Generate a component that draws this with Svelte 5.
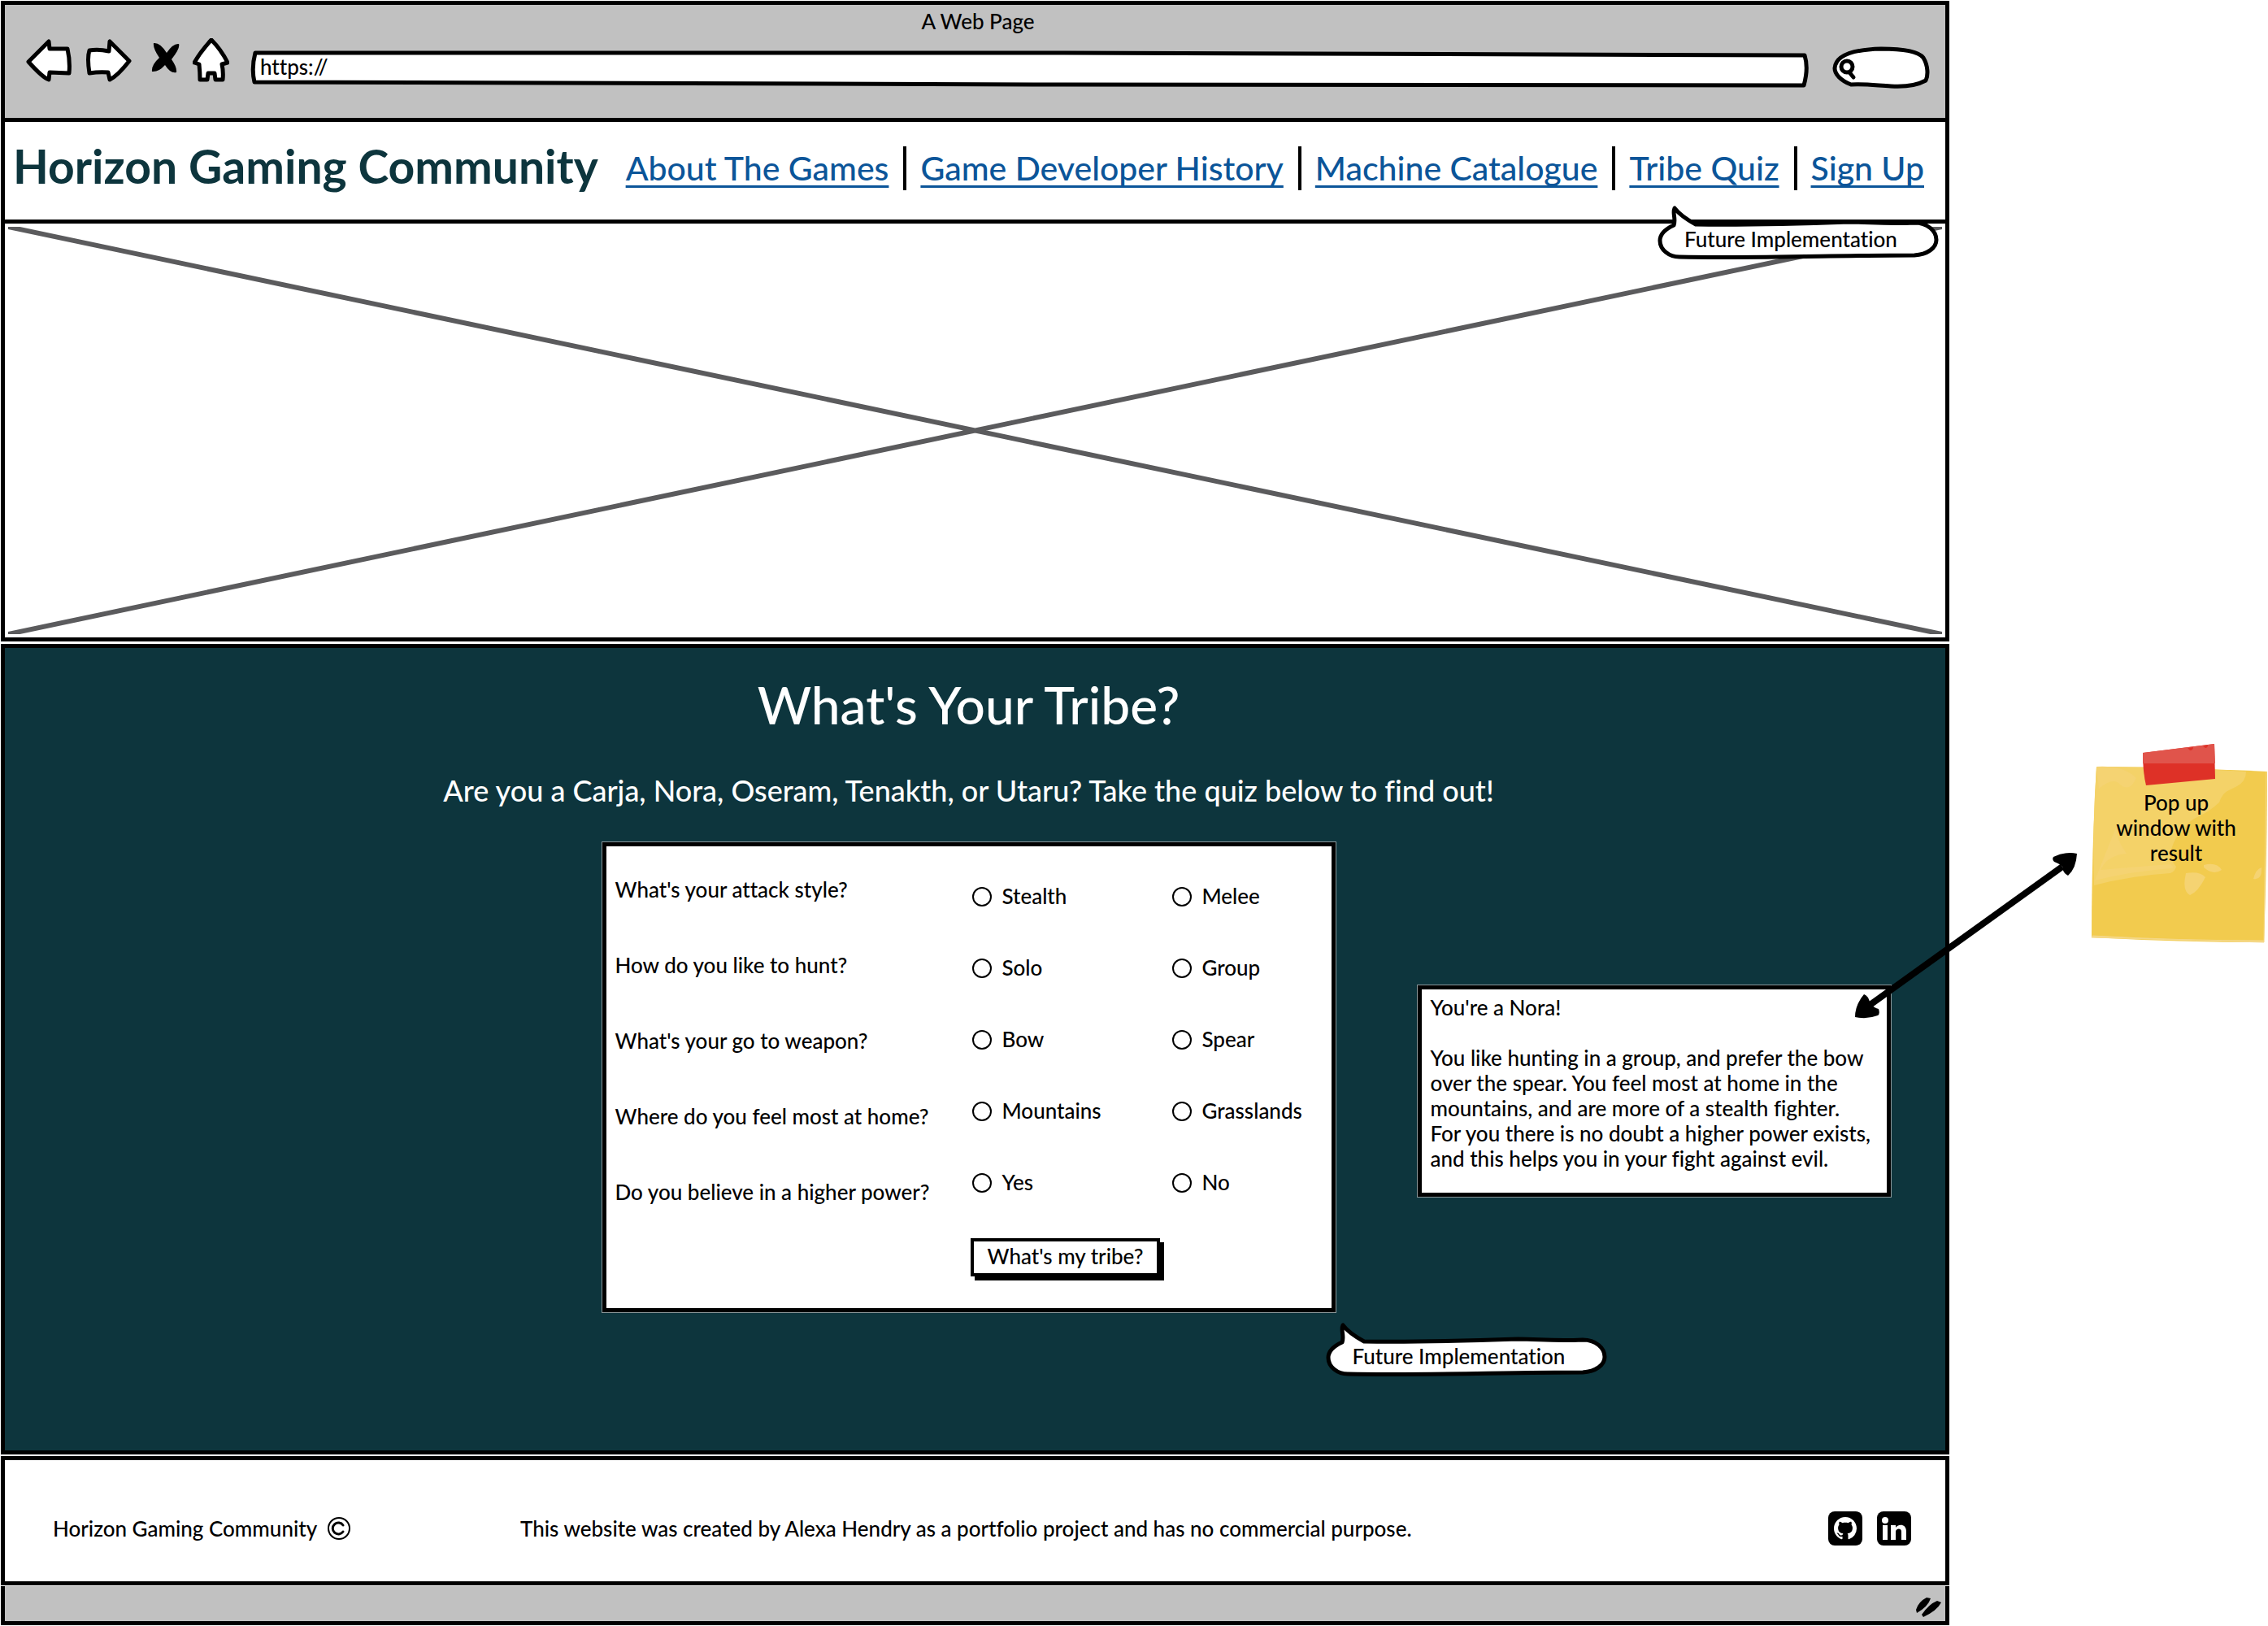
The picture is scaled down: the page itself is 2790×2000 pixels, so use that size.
<script>
  const links = ['About The Games', 'Game Developer History', 'Machine Catalogue', 'Tribe Quiz', 'Sign Up'];

  const quiz = [
    { id: 'attack', question: "What's your attack style?", options: ['Stealth', 'Melee'] },
    { id: 'hunt', question: 'How do you like to hunt?', options: ['Solo', 'Group'] },
    { id: 'weapon', question: "What's your go to weapon?", options: ['Bow', 'Spear'] },
    { id: 'home', question: 'Where do you feel most at home?', options: ['Mountains', 'Grasslands'] },
    { id: 'power', question: 'Do you believe in a higher power?', options: ['Yes', 'No'] }
  ];

  const result = [
    'You like hunting in a group, and prefer the bow',
    'over the spear. You feel most at home in the',
    'mountains, and are more of a stealth fighter.',
    'For you there is no doubt a higher power exists,',
    'and this helps you in your fight against evil.'
  ];
</script>

{#snippet callout(text)}
  <svg class="bubble" viewBox="0 0 345 64" preserveAspectRatio="none" aria-hidden="true">
    <path d="M20 22 C9 27 3 33 3 41 C3 52 14 61 27 61 C120 63 220 59 316 59 C332 58 343 50 343 40 C343 29 332 19 316 19 C280 21 262 18 236 18 C180 20 120 22 47 21 C36 15 27 9 21 1 C18 7 23 14 20 22Z" fill="#fff" stroke="#000" stroke-width="5" stroke-linejoin="round" />
  </svg>
  <span class="bubble-text">{text}</span>
{/snippet}

<div class="page">
  <div class="window">
    <header class="browser">
      <div class="browser-title">A Web Page</div>
      <div class="toolbar">
        <div class="tools">
          <button class="tool" aria-label="Back">
            <svg width="57" height="54" viewBox="0 0 57 54"><path d="M3 29 L28 4 L29 13 L51 13 C53 22 54 33 53 43 L29 42 L28 51 Q20 48 3 29Z" fill="#fff" stroke="#000" stroke-width="5" stroke-linejoin="round" /></svg>
          </button>
          <button class="tool" aria-label="Forward">
            <svg width="57" height="54" viewBox="0 0 57 54"><path d="M54 28 L30 4 L29 16 Q16 13 5 15 Q2 24 5 43 Q17 41 28 42 L30 51 Q40 46 54 28Z" fill="#fff" stroke="#000" stroke-width="5" stroke-linejoin="round" /></svg>
          </button>
          <button class="tool" aria-label="Stop">
            <svg width="43" height="54" viewBox="0 0 43 54"><path d="M11 6 Q19 5 27 18 Q35 6 42 7 Q44 12 33 26 Q40 36 39 42 Q32 44 25 33 Q17 42 9 41 Q8 33 18 24 Q10 12 11 6Z" /></svg>
          </button>
          <button class="tool" aria-label="Home">
            <svg width="45" height="54" viewBox="0 0 45 54"><path d="M23 2 Q35 14 43 30 L36 32 Q38 41 37 51 L28 51 L27 43 L19 43 L18 51 L9 51 Q9 42 8 32 L2 30 Q10 16 23 2Z" fill="#fff" stroke="#000" stroke-width="5" stroke-linejoin="round" /></svg>
          </button>
        </div>
        <div class="address">
          <svg class="fill" viewBox="0 0 1916 46" preserveAspectRatio="none" aria-hidden="true"><path d="M6 3 L1000 3 L1910 6 Q1915 22 1909 43 L1000 42 L5 39 Q1 22 6 3Z" fill="#fff" stroke="#000" stroke-width="5" stroke-linejoin="round" vector-effect="non-scaling-stroke" /></svg>
          <input class="url" type="text" aria-label="Address" value="https://" />
        </div>
        <div class="search">
          <svg class="fill" viewBox="0 0 120 51" preserveAspectRatio="none" aria-hidden="true">
            <path d="M3 27 C4 12 22 4 60 3 C88 3 106 6 112 14 C118 24 118 36 115 42 C104 48 88 50 72 49 C54 48 38 46 23 47 C10 42 3 34 3 27Z" fill="#fff" stroke="#000" stroke-width="5" stroke-linejoin="round" />
            <ellipse cx="18" cy="25" rx="7" ry="7" fill="none" stroke="#000" stroke-width="5" /><path d="M21 32 L26 38" stroke="#000" stroke-width="5" stroke-linecap="round" />
          </svg>
          <input class="search-input" type="search" aria-label="Search" />
        </div>
      </div>
    </header>

    <div class="site-nav">
      <div class="brand">Horizon Gaming Community</div>
      <nav class="links">
        {#each links as link}
          <span class="link-cell"><a href="#top">{link}</a></span>
        {/each}
      </nav>
    </div>

    <div class="hero">
      <svg class="cross" viewBox="0 0 100 100" preserveAspectRatio="none" aria-hidden="true">
        <path d="M0 0 L100 100 M0 100 L100 0" stroke="#5b5b5d" stroke-width="6" vector-effect="non-scaling-stroke" />
      </svg>
      <div class="callout nav-callout">{@render callout('Future Implementation')}</div>
    </div>

    <main class="tribe">
      <h1>What's Your Tribe?</h1>
      <p class="intro">Are you a Carja, Nora, Oseram, Tenakth, or Utaru? Take the quiz below to find out!</p>
      <div class="stage">
        <form class="quiz card">
          <div class="questions">
            {#each quiz as q}<div id={q.id}>{q.question}</div>{/each}
          </div>
          <div class="answers">
            {#each quiz as q}
              <div class="answer" role="radiogroup" aria-labelledby={q.id}>
                {#each q.options as option}
                  <label><input type="radio" name={q.id} value={option} />{option}</label>
                {/each}
              </div>
            {/each}
            <button type="button" class="submit">What's my tribe?</button>
          </div>
          <div class="callout quiz-callout">{@render callout('Future Implementation')}</div>
        </form>
        <aside class="result card">
          <p>You're a Nora!</p>
          <p>{#each result as line}<span>{line} </span>{/each}</p>
        </aside>
      </div>
    </main>

    <footer class="site-footer">
      <div class="owner">
        <span>Horizon Gaming Community</span>
        <svg width="30" height="30" viewBox="0 0 30 30" role="img" aria-label="Copyright"><circle cx="15" cy="15" r="13" fill="none" stroke="#000" stroke-width="2" /><path d="M20 11 A7 7 0 1 0 20 19" fill="none" stroke="#000" stroke-width="3" stroke-linecap="round" /></svg>
      </div>
      <div class="credit">This website was created by Alexa Hendry as a portfolio project and has no commercial purpose.</div>
      <div class="social">
        <a href="#github" aria-label="GitHub">
          <svg width="42" height="42" viewBox="0 0 42 42"><rect width="42" height="42" rx="8" /><g transform="translate(7 7) scale(1.75)"><path fill="#fff" d="M8 0C3.58 0 0 3.58 0 8c0 3.54 2.29 6.53 5.47 7.59.4.07.55-.17.55-.38 0-.19-.01-.82-.01-1.49-2.01.37-2.53-.49-2.69-.94-.09-.23-.48-.94-.82-1.13-.28-.15-.68-.52-.01-.53.63-.01 1.08.58 1.23.82.72 1.21 1.87.87 2.33.66.07-.52.28-.87.51-1.07-1.78-.2-3.64-.89-3.64-3.95 0-.87.31-1.59.82-2.15-.08-.2-.36-1.02.08-2.12 0 0 .67-.21 2.2.82.64-.18 1.32-.27 2-.27s1.36.09 2 .27c1.53-1.04 2.2-.82 2.2-.82.44 1.1.16 1.92.08 2.12.51.56.82 1.27.82 2.15 0 3.07-1.87 3.75-3.65 3.95.29.25.54.73.54 1.48 0 1.07-.01 1.93-.01 2.2 0 .21.15.46.55.38A8.01 8.01 0 0 0 16 8c0-4.42-3.58-8-8-8z" /></g></svg>
        </a>
        <a href="#linkedin" aria-label="LinkedIn">
          <svg width="42" height="42" viewBox="0 0 42 42"><rect width="42" height="42" rx="8" /><circle cx="10" cy="11" r="4" fill="#fff" /><path fill="#fff" d="M7 17h6v18H7zM17 17h6v3c2-4 13-6 13 5v10h-6V25c0-5-7-4-7 0v10h-6z" /></svg>
        </a>
      </div>
    </footer>

    <div class="status">
      <svg width="32" height="26" viewBox="0 0 32 26" aria-hidden="true"><path d="M1 16 Q4 6 14 1 L19 2 Q16 12 2 20Z M8 22 Q17 9 27 5 L32 7 Q27 17 10 25Z" /></svg>
    </div>
  </div>

  <div class="notes">
    <svg class="arrow" width="280" height="210" viewBox="0 0 280 210" aria-hidden="true">
      <path d="M20 191 L258 20" stroke="#000" stroke-width="8" />
      <path d="M3 205 Q3 190 14 177 Q19 178 22 189 Q27 194 32 195 Q34 201 31 203 Q18 208 3 205Z M276 4 Q262 1 247 8 Q245 11 248 14 Q257 17 259 22 Q258 27 265 31 Q275 22 276 4Z" />
    </svg>
    <div class="sticky">
      <svg class="paper" viewBox="0 0 218 245" preserveAspectRatio="none" aria-hidden="true">
        <path d="M7 28 Q90 28 217 34 Q217 130 213 244 Q110 244 1 238 Q1 130 7 28Z" fill="#f2cb4e" />
        <path d="M7 28 Q90 28 191 34 Q191 46 180 52 L170 57 Q162 60 158 72 Q146 83 135 88 Q119 95 115 105 Q102 114 98 135 Q98 142 105 151 Q104 156 98 159 Q50 162 4 174 Q2 100 7 28Z" fill="#f4d268" />
        <path d="M7 28 Q40 26 56 42 Q48 60 36 50 Q28 40 10 55 M32 100 Q29 114 44 135 Q20 137 12 155 Q60 151 98 148 Q104 152 99 153 Q48 157 5 168 M117 159 Q134 156 141 164 Q132 182 122 186 Q112 181 117 159 M139 149 Q155 145 161 155 Q151 162 139 152 M200 166 Q203 154 210 152 Q211 168 200 166" fill="#f5d372" />
        <path d="M2 236 Q110 242 213 242 L213 244 L1 238Z M216 34 L213 242" fill="#f5d887" stroke="#f5d887" />
        <path d="M64 11 L152 0 L153 43 L68 51 Q64 35 64 11Z" fill="#de3127" />
        <path d="M64 11 L152 0 L153 24 L64 24Z" fill="#e0544b" />
        <path d="M119 5 L126 4 Q126 8 122 8Z M138 3 L144 1 Q144 5 141 5Z" fill="#de3127" />
      </svg>
      <p>Pop up<br />window with<br />result</p>
    </div>
  </div>
</div>

<style>
  :global(body) {
    margin: 0;
    background: #fff;
  }
  * {
    box-sizing: border-box;
  }
  .page {
    display: grid;
    grid-template-columns: minmax(0, 1fr) 392px;
    padding: 1px 0 0 1px;
    font-family: Lato, 'Open Sans', sans-serif;
    font-size: 26px;
    font-weight: 500;
    font-variant-ligatures: none;
    line-height: 31px;
    color: #000;
  }
  h1,
  p {
    margin: 0;
    font-weight: inherit;
  }
  svg {
    display: block;
  }
  button,
  input {
    font: inherit;
    color: inherit;
    margin: 0;
  }
  .window {
    display: flex;
    flex-direction: column;
  }
  .browser {
    padding: 5px 19px 37px 26px;
    background: #c1c1c1;
    border: 5px solid #000;
  }
  .browser-title {
    text-align: center;
  }
  .toolbar {
    display: flex;
    align-items: flex-end;
    padding-top: 5px;
  }
  .tools {
    display: flex;
    gap: 16px;
    margin-right: 26px;
    padding-bottom: 7px;
  }
  .tool {
    padding: 0;
    border: 0;
    background: none;
  }
  .address {
    position: relative;
    flex: 1;
    height: 46px;
    margin-right: 28px;
  }
  .search {
    position: relative;
    width: 120px;
    height: 51px;
  }
  .fill,
  .bubble,
  .paper {
    position: absolute;
    inset: 0;
    width: 100%;
    height: 100%;
    overflow: visible;
  }
  .url,
  .search-input {
    position: relative;
    width: 100%;
    height: 100%;
    padding: 0 12px 6px;
    border: 0;
    outline: 0;
    background: none;
  }
  .search-input {
    padding-left: 32px;
  }
  .site-nav {
    display: flex;
    align-items: center;
    justify-content: space-between;
    padding: 20px 26px 32px 10px;
    border: solid #000;
    border-width: 0 5px 5px;
  }
  .brand {
    font-size: 57px;
    line-height: 68px;
    font-weight: 700;
    color: #0d353d;
    white-space: nowrap;
  }
  .links {
    display: flex;
    padding-top: 6px;
    font-size: 41px;
    line-height: 54px;
    white-space: nowrap;
  }
  .link-cell + .link-cell {
    margin-left: 18px;
    padding-left: 17px;
    border-left: 4px solid #000;
  }
  .links a {
    color: #0b5599;
    text-decoration: underline;
    text-decoration-thickness: 3px;
    text-underline-offset: 6px;
    text-decoration-skip-ink: none;
  }
  .hero {
    position: relative;
    padding: 4px;
    border: solid #000;
    border-width: 0 5px 5px;
  }
  .cross {
    width: 100%;
    height: 501px;
  }
  .callout {
    position: absolute;
    width: 345px;
    padding: 24px 33px 9px;
    white-space: nowrap;
  }
  .bubble-text {
    position: relative;
  }
  .nav-callout {
    top: -20px;
    right: 9px;
  }
  .tribe {
    margin-top: 3px;
    padding: 32px 16px 170px 0;
    background: #0d353d;
    border: 5px solid #000;
    color: #fff;
    text-align: center;
  }
  h1 {
    font-size: 64px;
    line-height: 76px;
  }
  .intro {
    margin: 47px 0 44px;
    font-size: 36px;
    line-height: 40px;
  }
  .stage {
    display: grid;
    grid-template-columns: minmax(0, 1fr) 902px minmax(0, 1fr);
    align-items: start;
    color: #000;
    text-align: left;
  }
  .card {
    background: #fff;
    border: 5px solid #000;
    outline: 1px solid #8a9699;
  }
  .quiz {
    position: relative;
    grid-column: 2;
    display: flex;
    justify-content: space-between;
    padding: 38px 1px 39px 11px;
  }
  .questions {
    display: flex;
    flex-direction: column;
    gap: 62px;
  }
  .answers {
    width: 443px;
    padding-top: 8px;
  }
  .answer {
    display: grid;
    grid-template-columns: 246px 1fr;
    margin-bottom: 57px;
    padding-left: 2px;
  }
  .answer:last-of-type {
    margin-bottom: 53px;
  }
  label {
    display: flex;
    align-items: center;
    gap: 13px;
  }
  input[type='radio'] {
    appearance: none;
    width: 24px;
    height: 24px;
    border: 2px solid #000;
    border-radius: 50%;
    background: #fff;
  }
  .submit {
    padding: 3px 17px 5px;
    background: #fff;
    border: 4px solid #000;
    box-shadow: 5px 5px 0 #000;
  }
  .quiz-callout {
    top: 588px;
    left: 885px;
  }
  .result {
    margin: 176px 0 0 101px;
    padding: 7px 0 26px 11px;
    width: 582px;
    white-space: nowrap;
  }
  .result p + p {
    margin-top: 31px;
  }
  .result span {
    display: block;
  }
  .site-footer {
    display: grid;
    grid-template-columns: 575px 1fr auto;
    align-items: center;
    margin-top: 2px;
    padding: 63px 42px 44px 59px;
    border: 5px solid #000;
  }
  .owner,
  .social {
    display: flex;
    align-items: center;
  }
  .owner {
    gap: 12px;
  }
  .social {
    gap: 18px;
  }
  .status {
    display: flex;
    justify-content: flex-end;
    margin-top: 1px;
    padding: 13px 5px 4px;
    background: #c1c1c1;
    border: solid #000;
    border-width: 0 5px 5px;
  }
  .notes {
    position: relative;
    padding: 914px 0 0 174px;
  }
  .arrow {
    position: absolute;
    top: 1045px;
    left: -119px;
  }
  .sticky {
    position: relative;
    height: 245px;
    padding: 57px 8px 0 0;
    text-align: center;
  }
  .sticky p {
    position: relative;
  }
</style>
